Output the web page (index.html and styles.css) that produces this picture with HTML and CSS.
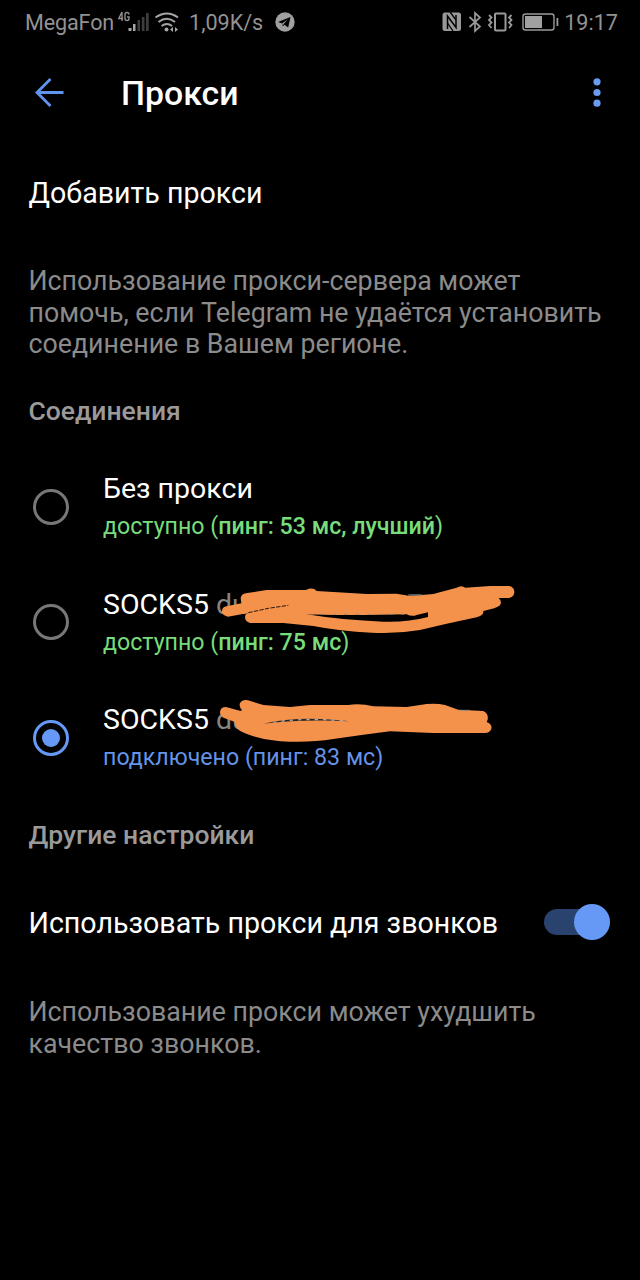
FILE: index.html
```html
<!DOCTYPE html>
<html lang="ru">
<head>
<meta charset="utf-8">
<title>Прокси</title>
<link rel="stylesheet" href="styles.css">
</head>
<body>
<div class="status">
  <span class="carrier">MegaFon</span>
  <svg class="signal" width="62" height="26" viewBox="0 0 62 26">
    <g fill="none" stroke="#909090" stroke-width="1.4"><path d="M4 1L.8 7.500H5.200M4 1V10M11 3.500Q11 1.500 9 1.500T7 3.500V7.500Q7 9.500 9 9.500T11 7.500V6H9"/></g>
    <g fill="#a5a5a5"><rect x="10.500" y="17" width="3" height="3"/><rect x="15" y="13" width="2.500" height="7"/></g>
    <g fill="#3d3d3d"><rect x="19.500" y="9" width="2.500" height="11"/><rect x="23.800" y="6" width="2.700" height="14"/><rect x="28" y="2" width="2.700" height="18"/></g>
    <g fill="none" stroke="#a5a5a5" stroke-width="2"><path d="M37.500 6.500Q49 -1.500 60 6.500M40.500 11Q49 4.500 57 11M43.500 15Q49 11 54 15"/></g>
    <circle cx="48.500" cy="18.500" r="2" fill="#a5a5a5"/><path d="M55 16V21L52 18.500ZM57 16V21L60 18.500Z" fill="#a5a5a5"/>
  </svg>
  <span class="speed">1,09K/s</span>
  <svg class="plane" width="20" height="20" viewBox="0 0 20 20"><circle cx="10" cy="10" r="9.700" fill="#a0a0a0"/><path d="M3 10L15.500 5L13.200 15.500L9.500 12.700L7.800 14.500L7.300 11.500Z" fill="#000"/><path d="M7.300 11.200L12.500 7.500L8.700 12L8 13.600Z" fill="#a0a0a0"/></svg>
  <svg class="devices" width="118" height="22" viewBox="0 0 118 22">
    <rect x="1.500" y="1.500" width="18.500" height="18.500" rx="2.500" fill="#999"/>
    <path d="M6.500 18V5L15 16.500V4" fill="none" stroke="#000" stroke-width="1.500"/>
    <path d="M9 1L15 9M6.500 12L12 20" fill="none" stroke="#000" stroke-width="1.300"/>
    <path d="M28.500 6L39 15.500L34 20V2L39 6.500L28.500 16" fill="none" stroke="#999" stroke-width="1.700"/>
    <rect x="54" y="2.500" width="10.500" height="17" rx="1" fill="none" stroke="#999" stroke-width="2"/>
    <path d="M48 4L50.500 6.500L48 9L50.500 11.500L48 14L50.500 17M70.500 4L68 6.500L70.500 9L68 11.500L70.500 14L68 17" fill="none" stroke="#999" stroke-width="1.800"/>
    <rect x="82" y="3" width="31" height="16" rx="2.500" fill="none" stroke="#999" stroke-width="1.400"/><rect x="84" y="5" width="17" height="12" fill="#a0a0a0"/><rect x="115.500" y="7" width="1.800" height="8" fill="#999"/>
  </svg>
  <span class="clock">19:17</span>
</div>
<header class="bar">
  <svg class="back" width="32" height="32" viewBox="0 0 32 32"><path d="M30.500 15.500H3.500M17.500 2L4 15.500L17.500 29" fill="none" stroke="#6095ee" stroke-width="2.800"/></svg>
  <h1 class="title">Прокси</h1>
  <svg class="more" width="8" height="30" viewBox="0 0 8 30" fill="#6a9cf3"><circle cx="4" cy="3.800" r="3.600"/><circle cx="4" cy="14.500" r="3.600"/><circle cx="4" cy="25.200" r="3.600"/></svg>
</header>
<main>
  <div class="row add">Добавить прокси</div>
  <p class="hint hint-top">Использование прокси-сервера может<br>помочь, если Telegram не удаётся установить<br>соединение в Вашем регионе.</p>
  <h2 class="section">Соединения</h2>
  <div class="proxy">
    <span class="radio"></span>
    <div class="info"><div class="name">Без прокси</div><div class="state">доступно (<b>пинг: 53 мс, лучший</b>)</div></div>
  </div>
  <div class="proxy">
    <span class="radio"></span>
    <div class="info"><div class="name">SOCKS5 <span class="host">du</span></div><div class="state">доступно (<b>пинг: 75 мс</b>)</div></div>
    <svg class="scribble" width="330" height="70" viewBox="0 0 990 210">
      <path d="M122 66Q124 52 142 51L200 42L318 42Q338 32 350 45L500 54L590 53L630 60L700 54L770 35Q784 26 796 35L870 30H928Q943 34 943 48T928 66H896Q907 76 900 88Q890 97 850 105Q852 118 830 124L740 143L660 162Q590 174 515 170Q420 166 340 150L250 141H150Q135 137 135 124T148 110L84 122Q66 119 66 106T80 91L124 82Z" fill="#f4924c"/>
      <path d="M320 115L400 117L500 117L620 115Q635 123 650 117L684 109V123Q625 139 550 137Q430 133 320 115Z" fill="#000"/>
      <path d="M145 110L205 97L265 88" fill="none" stroke="#241711" stroke-width="3" stroke-dasharray="13 4"/>
      <path d="M330 115H615" stroke="#888" stroke-width="2" stroke-dasharray="12 22"/><path d="M625 57H665" stroke="#888" stroke-width="4"/>
    </svg>
  </div>
  <div class="proxy">
    <span class="radio on"></span>
    <div class="info"><div class="name">SOCKS5 <span class="host">du</span></div><div class="state connected">подключено (пинг: 83 мс)</div></div>
    <svg class="scribble second" width="310" height="60" viewBox="0 0 930 180">
      <path d="M60 64Q61 48 78 48L122 60L126 57Q116 47 120 36Q128 24 144 28L190 42L270 48L330 42H445Q480 36 520 46L620 48L680 39Q710 36 735 42L775 56L850 60Q866 67 863 86L860 93Q877 99 874 113Q869 126 855 126H700L570 121L490 131L400 144Q340 154 270 152Q190 149 135 127Q105 116 103 92L70 80Q60 75 60 64Z" fill="#f4924c"/>
      <path d="M190 98Q300 72 450 91Q310 84 190 98Z" fill="#30251e"/><path d="M220 94Q300 80 430 89" fill="none" stroke="#aaa" stroke-width="4" stroke-dasharray="10 15"/><path d="M780 58H810" stroke="#888" stroke-width="3"/>
    </svg>
  </div>
  <h2 class="section other">Другие настройки</h2>
  <div class="row calls"><span>Использовать прокси для звонков</span><span class="switch"><span class="thumb"></span></span></div>
  <p class="hint">Использование прокси может ухудшить<br>качество звонков.</p>
</main>
</body>
</html>
```
FILE: styles.css
```css
* { box-sizing: border-box; }
body { margin: 0; width: 640px; height: 1280px; background: #000; color: #fff; font-family: Roboto, sans-serif; overflow: hidden; }
h1, h2, p { margin: 0; }
svg { display: block; flex: none; }
.status { display: flex; align-items: center; height: 44px; padding: 0 22px 0 25px; color: #929292; font-size: 21.6px; white-space: nowrap; }
.carrier { width: 93px; letter-spacing: -.15px; }
.signal { margin-top: 4px; }
.speed { margin-left: 9px; width: 86px; }
.devices { margin-left: auto; }
.clock { margin-left: 5px; }
.bar { display: flex; align-items: center; height: 98px; padding: 0 39.5px 0 33px; }
.title { margin-left: 56px; font-size: 33.8px; font-weight: 500; }
.more { margin-left: auto; }
.row { display: flex; align-items: center; font-size: 28.6px; padding: 0 30px 0 28.5px; white-space: nowrap; }
.add { height: 102px; }
.hint { padding-left: 28.5px; font-size: 26.77px; line-height: 31.5px; color: #8b8b8b; white-space: nowrap; }
.hint-top { margin-top: 22px; }
.section { margin: 32px 0 0 28.5px; height: 36px; line-height: 36px; font-size: 26.5px; font-weight: 500; color: #9a9a9a; }
.proxy { position: relative; display: flex; align-items: center; height: 115.5px; padding-left: 33px; }
.section + .proxy { margin-top: 22px; }
.radio { flex: none; display: flex; align-items: center; justify-content: center; width: 36px; height: 36px; margin-top: -3px; border: 3px solid #777; border-radius: 50%; }
.radio.on { border-color: #6599f5; }
.radio.on::after { content: ""; width: 18px; height: 18px; border-radius: 50%; background: #6599f5; }
.info { margin-left: 34px; white-space: nowrap; }
.name { font-size: 28.5px; line-height: 36px; }
.host { color: #858585; }
.state { font-size: 23.2px; line-height: 38px; color: #78dc7b; }
.state b { font-weight: 500; }
.connected { color: #6493e8; }
.scribble { position: absolute; left: 200px; top: 10px; }
.second { top: 9px; }
.other { margin-top: 20px; }
.calls { height: 108px; margin-top: 16px; justify-content: space-between; }
.switch { display: flex; align-items: center; justify-content: flex-end; width: 66px; height: 26px; margin-top: -3px; border-radius: 13px; background: #29426e; }
.thumb { width: 36px; height: 36px; border-radius: 50%; background: #6599f5; }
.calls + .hint { margin-top: 20px; }
```
